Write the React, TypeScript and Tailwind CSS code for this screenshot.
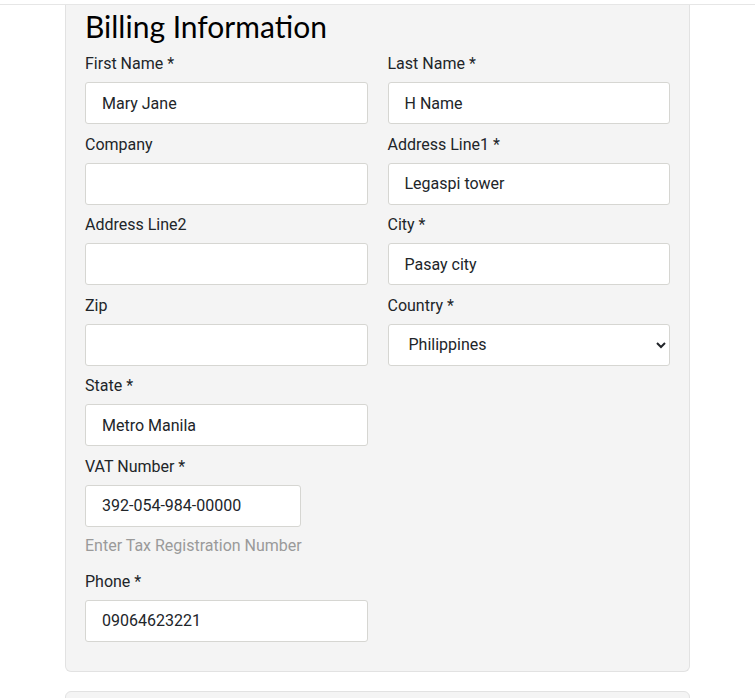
import React from 'react';

const inputCls =
  'block w-full h-[42px] px-4 bg-white border border-[#d6d6d2] rounded-[3px] text-[16px] text-[#212529] outline-none';

const labelCls = 'block text-[16px] leading-6 text-[#212529] mb-[7px] translate-y-[1px]';

function Field({
  label,
  value = '',
  className = '',
}: {
  label: string;
  value?: string;
  className?: string;
}) {
  return (
    <div className="mb-[7.6px]">
      <label className={labelCls}>{label}</label>
      <input className={`${inputCls} ${className}`} defaultValue={value} />
    </div>
  );
}

export default function App() {
  return (
    <div className="min-h-screen bg-white font-['Roboto',sans-serif] overflow-hidden">
      {/* header bottom edge */}
      <div className="h-[5px] border-b border-[#e6e6e6]" />

      <div className="ml-[65px] w-[625px]">
        <div className="bg-[#f4f4f4] border-x border-b border-[#e2e2e2] rounded-b-[6px] px-[19px] pb-[21px]">
          <h2 className="font-['Lato',sans-serif] text-[30px] leading-[42px] text-black mb-[4px]">
            Billing Information
          </h2>

          <div className="grid grid-cols-2 gap-x-5">
            <Field label="First Name *" value="Mary Jane" />
            <Field label="Last Name *" value="H Name" />
            <Field label="Company" />
            <Field label="Address Line1 *" value="Legaspi tower" />
            <Field label="Address Line2" />
            <Field label="City *" value="Pasay city" />
            <Field label="Zip" />
            <div className="mb-[7.6px]">
              <label className={labelCls}>Country *</label>
              <select className={inputCls} defaultValue="PH">
                <option value="PH">Philippines</option>
              </select>
            </div>
            <Field label="State *" value="Metro Manila" />
            <div />
          </div>

          <div className="mb-2">
            <label className={labelCls}>VAT Number *</label>
            <input className={`${inputCls} !w-[216px]`} defaultValue="392-054-984-00000" />
            <p className="mt-[7px] mb-[11px] text-[16px] leading-6 text-[#9a9a9a]">
              Enter Tax Registration Number
            </p>
          </div>

          <div className="w-[283px]">
            <Field label="Phone *" value="09064623221" />
          </div>
        </div>

        <div className="mt-[19px] h-[40px] bg-[#f4f4f4] border border-[#e2e2e2] rounded-t-[6px]" />
      </div>
    </div>
  );
}
